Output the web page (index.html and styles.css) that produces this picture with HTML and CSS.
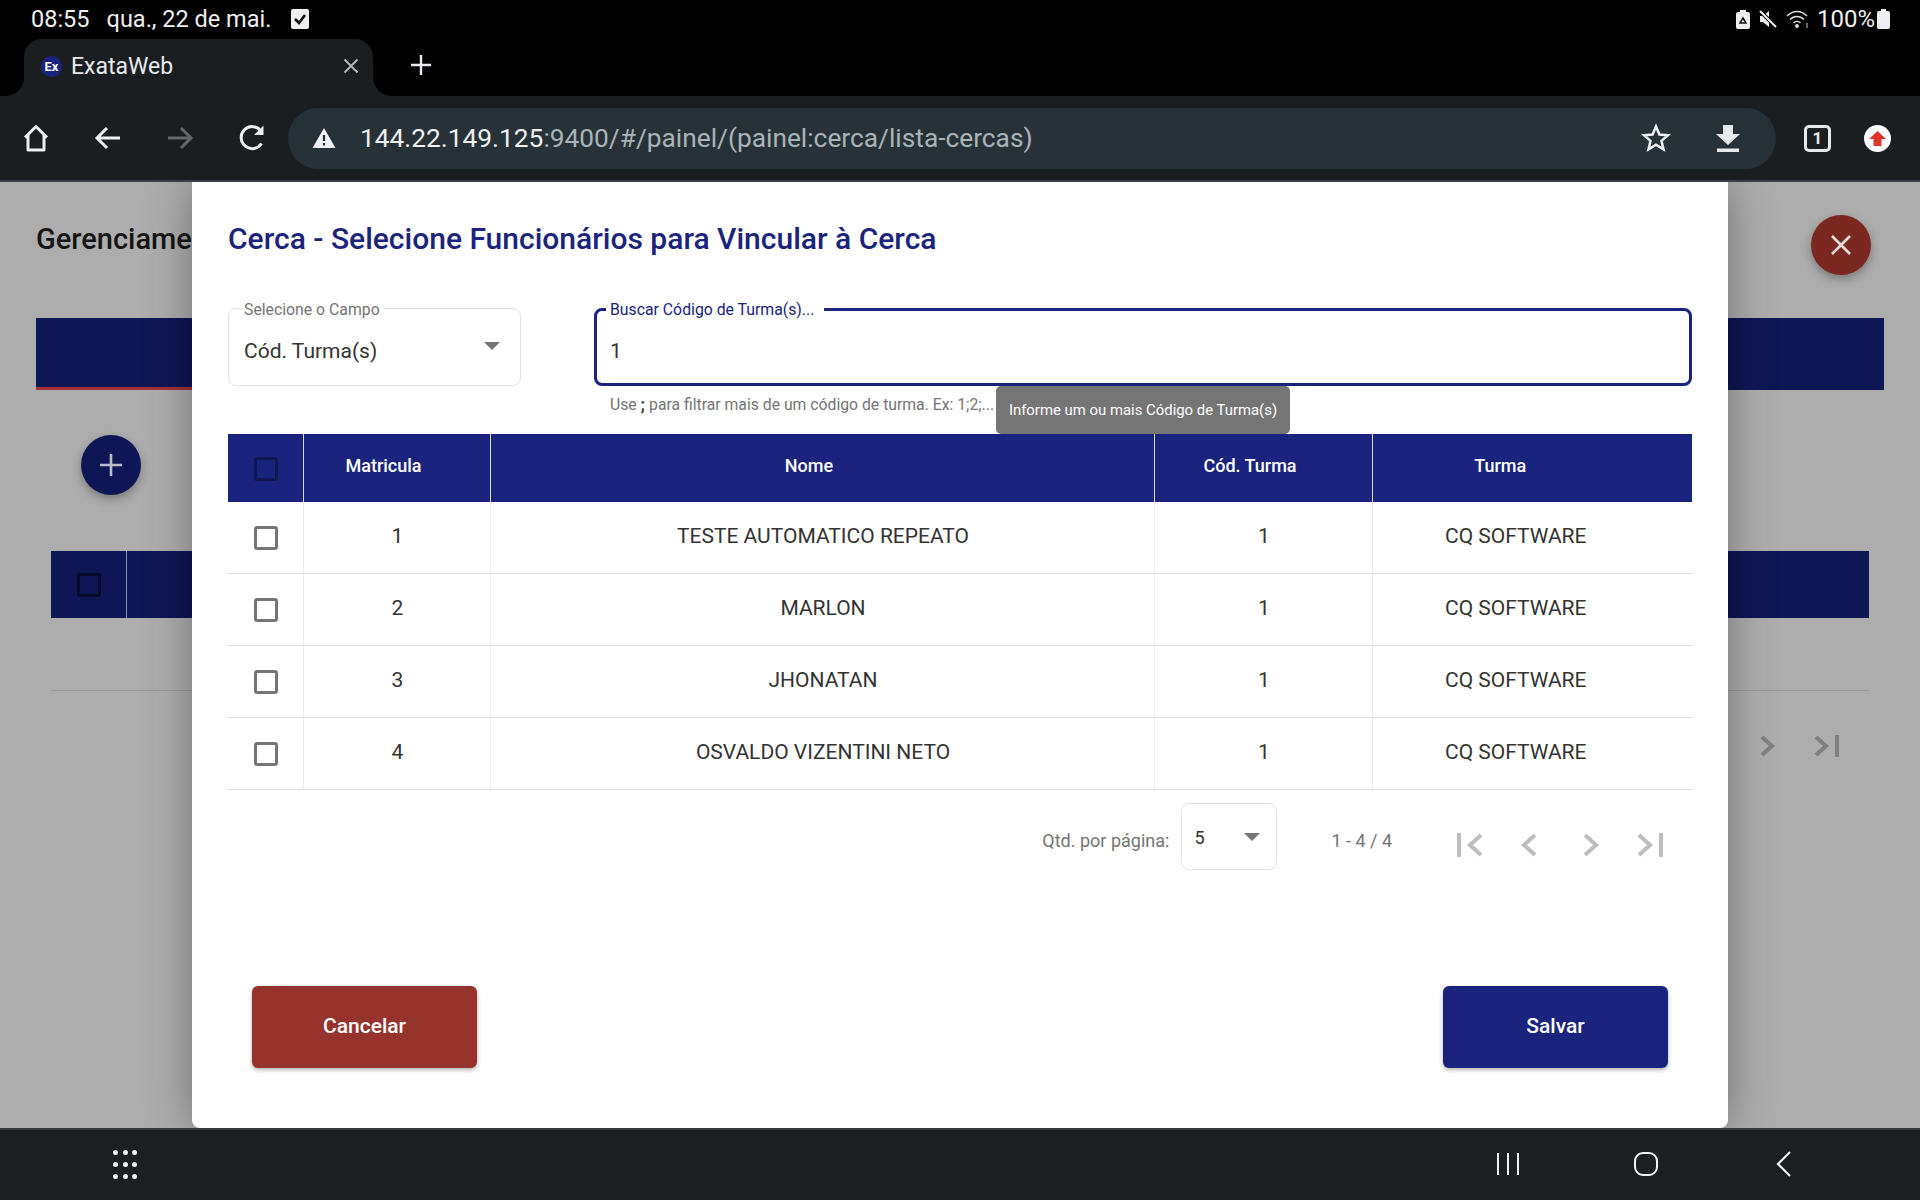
FILE: index.html
```html
<!DOCTYPE html>
<html lang="pt-BR">
  <head>
    <meta charset="UTF-8" />
    <meta name="viewport" content="width=device-width, initial-scale=1.0" />
    <title>ExataWeb</title>
    <link rel="stylesheet" href="styles.css">
  </head>
  <body>
    <div class="statusbar">
      <span class="clock">08:55</span>
      <span class="date">qua., 22 de mai.</span>
      <svg class="status-check" width="18" height="22" viewBox="0 0 18 22"><rect x="0" y="1" width="18" height="20" rx="2" fill="#eee"/><path d="M4 11l4 4 6-8" fill="none" stroke="#111" stroke-width="2.6"/></svg>
      <span class="status-right">
        <svg width="14" height="19" viewBox="0 0 14 19"><path d="M4 0h6v2h2a2 2 0 0 1 2 2v13a2 2 0 0 1-2 2H2a2 2 0 0 1-2-2V4a2 2 0 0 1 2-2h2z" fill="#eee"/><path d="M4 13l3-5 3 5z" fill="none" stroke="#111" stroke-width="1.5"/></svg>
        <svg width="18" height="18" viewBox="0 0 18 18"><path d="M1 6h3l6-5v16l-6-5H1z" fill="#eee"/><path d="M1 1l16 16" stroke="#000" stroke-width="4"/><path d="M1 1l16 16" stroke="#eee" stroke-width="2"/></svg>
        <svg width="23" height="20" viewBox="0 0 23 20" fill="none" stroke="#ddd" stroke-width="1.5"><path d="M1 7c6-6 14-6 20 0M4 10.500c4-4 10-4 14 0M7.500 14c2-2 5-2 7 0"/><circle cx="11" cy="17" r="1.200" fill="#ddd"/><path d="M21 19v-5" stroke="#888"/></svg>
        <span class="battery-text">100%</span>
        <svg width="13" height="20" viewBox="0 0 13 20"><path d="M4 0h5v2h2a2 2 0 0 1 2 2v14a2 2 0 0 1-2 2H2a2 2 0 0 1-2-2V4a2 2 0 0 1 2-2h2z" fill="#eee"/></svg>
      </span>
    </div>

    <div class="tabstrip">
      <div class="tab">
        <span class="favicon">Ex</span>
        <span class="tab-title">ExataWeb</span>
        <svg class="tab-close" width="16" height="16" viewBox="0 0 16 16"><path d="M1.500 1.500l13 13M14.500 1.500l-13 13" stroke="#b5b8ba" stroke-width="1.800"/></svg>
      </div>
      <svg class="tab-new" width="22" height="22" viewBox="0 0 22 22"><path d="M11 1v20M1 11h20" stroke="#e8eaed" stroke-width="2.400"/></svg>
    </div>

    <div class="toolbar">
      <button class="tool-btn">
        <svg width="30" height="30" viewBox="0 0 30 30" fill="none" stroke="#eef0f1" stroke-width="3" stroke-linejoin="round"><path d="M4 14.500 15 3.500l11 11M7 12v15h16V12"/></svg>
      </button>
      <button class="tool-btn">
        <svg width="28" height="28" viewBox="0 0 28 28" fill="none" stroke="#eef0f1" stroke-width="3"><path d="M26 14H4M13 4 3 14l10 10"/></svg>
      </button>
      <button class="tool-btn">
        <svg width="28" height="28" viewBox="0 0 28 28" fill="none" stroke="#62676a" stroke-width="3"><path d="M2 14h22M15 4l10 10-10 10"/></svg>
      </button>
      <button class="tool-btn">
        <svg width="28" height="28" viewBox="0 0 28 28" fill="none" stroke="#eef0f1" stroke-width="3"><path d="M23.500 19.500A11 11 0 1 1 23 7"/><path d="M25.500 1.500v9.500H16z" fill="#eef0f1" stroke="none"/></svg>
      </button>
      <div class="omnibox">
        <svg class="omni-warn" width="24" height="22" viewBox="0 0 24 22"><path d="M12 1 23.500 21H.500z" fill="#eef0f1"/><path d="M12 8v6M12 16v2.500" stroke="#263238" stroke-width="2.200"/></svg>
        <span class="url"><span class="url-host">144.22.149.125</span>:9400/#/painel/(painel:cerca/lista-cercas)</span>
        <svg class="omni-star" width="30" height="30" viewBox="0 0 30 30"><path d="M15 3.500l3.400 8 8.600.7-6.500 5.700 2 8.400L15 21.800 7.500 26.300l2-8.400L3 12.200l8.600-.7z" fill="none" stroke="#eef0f1" stroke-width="2.500" stroke-linejoin="miter"/></svg>
        <svg class="omni-download" width="24" height="28" viewBox="0 0 24 28"><path d="M7 1h10v9h7L12 21 0 10h7zM1 24.500h22V28H1z" fill="#e6e9ea"/></svg>
      </div>
      <span class="tab-count">1</span>
      <span class="update-badge">
        <svg width="17" height="15" viewBox="0 0 17 15"><path d="M8.500 0 17 8h-4.500v7h-8V8H0z" fill="#e0342b"/></svg>
      </span>
    </div>

    <main class="page">
      <div class="page-head">
        <h1 class="page-title">Gerenciame</h1>
        <span class="fab fab-close">
          <svg width="24" height="24" viewBox="0 0 24 24"><path d="M3 3l18 18M21 3 3 21" stroke="#eadcd9" stroke-width="2.600"/></svg>
        </span>
      </div>
      <div class="page-band"></div>
      <span class="fab fab-add">
        <svg width="24" height="24" viewBox="0 0 24 24"><path d="M12 1v22M1 12h22" stroke="#b9bcc9" stroke-width="2.600"/></svg>
      </span>
      <div class="page-table">
        <div class="page-table-head">
          <span class="check-cell"><span class="checkbox checkbox-head-dim"></span></span>
        </div>
      </div>
      <div class="page-pager">
        <svg width="18" height="22" viewBox="0 0 18 22" fill="none" stroke="#808080" stroke-width="4"><path d="M3 2l10 9-10 9"/></svg>
        <svg width="26" height="22" viewBox="0 0 26 22" fill="none" stroke="#808080" stroke-width="4"><path d="M2 2l10 9-10 9M23 0v22"/></svg>
      </div>

      <section class="modal">
        <h2 class="modal-title">Cerca - Selecione Funcionários para Vincular à Cerca</h2>

        <div class="filters">
          <div class="field field-select">
            <label class="field-label">Selecione o Campo</label>
            <span class="field-value">Cód. Turma(s)</span>
            <span class="select-arrow"></span>
          </div>
          <div class="field field-search">
            <label class="field-label">Buscar Código de Turma(s)...</label>
            <span class="field-value">1</span>
          </div>
        </div>

        <div class="hint-row">
          <span class="hint">Use <b>;</b> para filtrar mais de um código de turma. Ex: 1;2;...</span>
          <span class="tooltip">Informe um ou mais Código de Turma(s)</span>
        </div>

        <table class="grid">
          <colgroup>
            <col class="col-check" /><col class="col-mat" /><col class="col-name" /><col class="col-cod" /><col class="col-turma" />
          </colgroup>
          <thead>
            <tr>
              <th><span class="checkbox checkbox-head"></span></th>
              <th>Matricula</th>
              <th>Nome</th>
              <th>Cód. Turma</th>
              <th>Turma</th>
            </tr>
          </thead>
          <tbody>
            <tr>
              <td><span class="checkbox"></span></td>
              <td>1</td>
              <td>TESTE AUTOMATICO REPEATO</td>
              <td>1</td>
              <td>CQ SOFTWARE</td>
            </tr>
            <tr>
              <td><span class="checkbox"></span></td>
              <td>2</td>
              <td>MARLON</td>
              <td>1</td>
              <td>CQ SOFTWARE</td>
            </tr>
            <tr>
              <td><span class="checkbox"></span></td>
              <td>3</td>
              <td>JHONATAN</td>
              <td>1</td>
              <td>CQ SOFTWARE</td>
            </tr>
            <tr>
              <td><span class="checkbox"></span></td>
              <td>4</td>
              <td>OSVALDO VIZENTINI NETO</td>
              <td>1</td>
              <td>CQ SOFTWARE</td>
            </tr>
          </tbody>
        </table>

        <div class="pager">
          <span class="pager-label">Qtd. por página:</span>
          <div class="pager-select">
            <span>5</span>
            <span class="select-arrow"></span>
          </div>
          <span class="pager-range">1 - 4 / 4</span>
          <div class="pager-icons">
            <svg width="60" height="26" viewBox="0 0 60 26" fill="none" stroke="#bdbdbd" stroke-width="4"><path d="M19 1v24M41 3 30 13l11 10"/></svg>
            <svg width="60" height="26" viewBox="0 0 60 26" fill="none" stroke="#bdbdbd" stroke-width="4"><path d="M35 3 24 13l11 10"/></svg>
            <svg width="60" height="26" viewBox="0 0 60 26" fill="none" stroke="#bdbdbd" stroke-width="4"><path d="M25 3l11 10-11 10"/></svg>
            <svg width="60" height="26" viewBox="0 0 60 26" fill="none" stroke="#bdbdbd" stroke-width="4"><path d="M41 1v24M19 3l11 10-11 10"/></svg>
          </div>
        </div>

        <div class="actions">
          <button class="btn btn-cancel">Cancelar</button>
          <button class="btn btn-save">Salvar</button>
        </div>
      </section>
    </main>

    <div class="navbar">
      <span class="nav-dots">
        <i></i><i></i><i></i><i></i><i></i><i></i><i></i><i></i><i></i>
      </span>
      <svg class="nav-recents" width="24" height="24" viewBox="0 0 24 24"><path d="M2 1v22M12 1v22M22 1v22" stroke="#f2f2f2" stroke-width="2"/></svg>
      <svg class="nav-home" width="24" height="24" viewBox="0 0 24 24"><rect x="1" y="1" width="22" height="22" rx="8" fill="none" stroke="#f2f2f2" stroke-width="2"/></svg>
      <svg class="nav-back" width="16" height="26" viewBox="0 0 16 26"><path d="M14 1 2 13l12 12" fill="none" stroke="#f2f2f2" stroke-width="2.200"/></svg>
    </div>
  </body>
</html>
```

FILE: styles.css
```css
* {
  box-sizing: border-box;
  margin: 0;
  padding: 0;
}
html,
body {
  width: 1920px;
  height: 1200px;
  overflow: hidden;
}
body {
  display: flex;
  flex-direction: column;
  background-color: #000;
  font-family: Roboto, "Liberation Sans", sans-serif;
}

/* android status bar */
.statusbar {
  display: flex;
  align-items: center;
  height: 38px;
  padding: 0 30px 0 31px;
  color: #f0f0f0;
  font-size: 23.500px;
}
.date {
  margin-left: 17px;
}
.status-check {
  margin-left: 20px;
}
.status-right {
  display: flex;
  align-items: center;
  gap: 9px;
  margin-left: auto;
}
.battery-text {
  font-size: 24px;
  margin: 0 -7px 0 -1px;
}

/* chrome tabs */
.tabstrip {
  display: flex;
  align-items: flex-end;
  height: 58px;
  padding-left: 24px;
}
.tab {
  position: relative;
  display: flex;
  align-items: center;
  width: 349px;
  height: 57px;
  padding: 0 14px 3px 17px;
  background-color: #1b1e21;
  border-radius: 18px 18px 0 0;
}
/* flared feet of the active tab */
.tab::before,
.tab::after {
  content: "";
  position: absolute;
  bottom: 0;
  width: 18px;
  height: 18px;
}
.tab::before {
  left: -18px;
  background: radial-gradient(circle at 0 0, transparent 17.500px, #1b1e21 18px);
}
.tab::after {
  right: -18px;
  background: radial-gradient(circle at 100% 0, transparent 17.500px, #1b1e21 18px);
}
.favicon {
  display: flex;
  align-items: center;
  justify-content: center;
  width: 21px;
  height: 21px;
  border-radius: 50%;
  background-color: #1a237e;
  color: #fff;
  font-size: 13px;
  font-weight: 700;
}
.tab-title {
  margin-left: 9px;
  color: #e8eaed;
  font-size: 23px;
}
.tab-close {
  margin-left: auto;
}
.tab-new {
  margin: 0 0 20px 37px;
}

/* chrome toolbar */
.toolbar {
  display: flex;
  align-items: center;
  height: 86px;
  background-color: #1b1e21;
  border-bottom: 2px solid #3a4046;
}
.tool-btn {
  display: flex;
  align-items: center;
  justify-content: center;
  flex: none;
  width: 72px;
  height: 60px;
  background: none;
  border: none;
}
.omnibox {
  display: flex;
  align-items: center;
  width: 1488px;
  height: 61px;
  padding: 0 36px 0 24px;
  background-color: #263238;
  border-radius: 31px;
}
.url {
  margin-left: 24px;
  color: #a9b4b8;
  font-size: 26.300px;
}
.url-host {
  color: #eef0f1;
}
.omni-star {
  margin-left: auto;
}
.omni-download {
  margin-left: 45px;
}
.tab-count {
  display: flex;
  align-items: center;
  justify-content: center;
  width: 27px;
  height: 27px;
  margin-left: 28px;
  border: 3px solid #e6e9ea;
  border-radius: 5px;
  color: #e6e9ea;
  font-size: 17px;
  font-weight: 700;
}
.update-badge {
  display: flex;
  align-items: center;
  justify-content: center;
  width: 27px;
  height: 27px;
  margin-left: 33px;
  border-radius: 50%;
  background-color: #fff;
}

/* dimmed page behind the modal */
.page {
  position: relative;
  flex: 1;
  display: flex;
  flex-direction: column;
  padding: 0 36px;
  background-color: #adadad;
  overflow: hidden;
}
.page-head {
  display: flex;
  align-items: center;
  justify-content: space-between;
  height: 136px;
}
.page-title {
  height: 112px;
  white-space: nowrap;
  color: #151515;
  font-size: 29px;
  font-weight: 500;
  line-height: 114px;
  align-self: flex-start;
}
.fab {
  display: flex;
  align-items: center;
  justify-content: center;
  width: 60px;
  height: 60px;
  border-radius: 50%;
  box-shadow: 0 4px 10px rgba(0, 0, 0, 0.3);
}
.fab-close {
  margin-top: -10px;
  transform: translateX(-13px);
  background-color: #7b2820;
}
.page-band {
  height: 72px;
  background: linear-gradient(#0f1655, #0f1655) top / 100% 69px no-repeat, linear-gradient(90deg, #a23234 20%, #0f1655 20%);
}
.fab-add {
  margin: 45px 0 0 45px;
  background-color: #0f1655;
}
.page-table {
  margin: 56px 15px 0;
  height: 140px;
  border-bottom: 1px solid #999;
}
.page-table-head {
  height: 67px;
  background-color: #0f1655;
}
.check-cell {
  display: flex;
  align-items: center;
  justify-content: center;
  width: 76px;
  height: 100%;
  border-right: 1px solid #8f90a6;
}
.page-pager {
  display: flex;
  align-items: center;
  gap: 37px;
  justify-content: flex-end;
  margin: 44px 44px 0 0;
}

/* modal */
.modal {
  position: absolute;
  top: 0;
  left: 192px;
  width: 1536px;
  height: 946px;
  display: flex;
  flex-direction: column;
  padding: 36px 36px 60px;
  background-color: #fff;
  border-radius: 0 0 8px 8px;
  box-shadow: 0 0 45px rgba(0, 0, 0, 0.35);
}
.modal-title {
  height: 42px;
  color: #1a237e;
  font-size: 30px;
  font-weight: 500;
  line-height: 42px;
}
.filters {
  display: flex;
  gap: 73px;
  margin-top: 48px;
}
.field {
  position: relative;
  display: flex;
  align-items: center;
  height: 78px;
  padding: 7px 15px 0;
  border: 1px solid #e2e2e2;
  border-radius: 8px;
}
.field-select {
  width: 293px;
}
.field-search {
  flex: 1;
  padding-left: 13px;
  border: 3px solid #1a237e;
}
.field-label {
  position: absolute;
  top: -8px;
  left: 11px;
  padding: 0 4px;
  background-color: #fff;
  color: #757575;
  font-size: 15.800px;
  line-height: 18px;
}
.field-search .field-label {
  top: -10px;
  left: 9px;
  padding-right: 10px;
  color: #1a237e;
}
.field-value {
  color: #333;
  font-size: 21px;
}
.select-arrow {
  width: 0;
  height: 0;
  border-left: 8px solid transparent;
  border-right: 8px solid transparent;
  border-top: 8px solid #757575;
}
.field-select .select-arrow {
  margin: -9px 5px 0 auto;
}

.hint-row {
  position: relative;
  height: 48px;
  padding: 9px 0 0 382px;
}
.hint {
  color: #757575;
  font-size: 15.750px;
}
.hint b {
  color: #444;
  font-weight: 900;
}
.tooltip {
  position: absolute;
  top: 0;
  left: 768px;
  width: 294px;
  height: 48px;
  background-color: #757575;
  border-radius: 5px;
  color: #fff;
  font-size: 14.900px;
  line-height: 48px;
  text-align: center;
}

/* table */
.grid {
  width: 1464px;
  border-collapse: collapse;
  table-layout: fixed;
}
.col-check {
  width: 75px;
}
.col-mat {
  width: 187px;
}
.col-name {
  width: 664px;
}
.col-cod {
  width: 218px;
}
.grid th {
  height: 68px;
  padding: 0 26px 5px 0;
  background-color: #1a237e;
  border-left: 1px solid #d6d8e8;
  color: #fff;
  font-size: 18px;
  font-weight: 500;
}
.grid th:first-child {
  padding: 2px 0 0 1px;
  border-left: none;
}
.grid th:last-child {
  padding-right: 64px;
}
.grid td {
  height: 72px;
  padding: 0 0 2px 2px;
  border-left: 1px solid #ececec;
  border-bottom: 1px solid #e0e0e0;
  color: #333;
  font-size: 21px;
  text-align: center;
}
.grid tbody tr:first-child td {
  height: 71px;
}
.grid td:first-child {
  padding: 0 0 0 1px;
  border-left: none;
}
.grid td:last-child {
  padding-right: 35px;
}
.checkbox {
  display: inline-block;
  width: 24px;
  height: 24px;
  vertical-align: middle;
  border: 3px solid #757575;
  border-radius: 3px;
}
.checkbox-head {
  border-color: #11174f;
}
.checkbox-head-dim {
  border-color: #070a2b;
}

/* pagination */
.pager {
  display: flex;
  align-items: center;
  height: 93px;
  padding: 13px 12px 10px 0;
  justify-content: flex-end;
  color: #757575;
  font-size: 18px;
}
.pager-label {
  margin-top: 6px;
}
.pager-select {
  display: flex;
  width: 96px;
  height: 67px;
  margin: -2px 0 0 12px;
  padding: 23px 16px 0 12px;
  border: 1px solid #e2e2e2;
  border-radius: 8px;
  color: #333;
}
.pager-select .select-arrow {
  margin: 6px 0 0 auto;
}
.pager-range {
  margin: 6px 0 0 54px;
}
.pager-icons {
  display: flex;
  margin: 14px 0 0 48px;
}

.actions {
  display: flex;
  justify-content: space-between;
  margin-top: auto;
  padding: 0 24px;
}
.btn {
  width: 225px;
  height: 82px;
  padding-bottom: 2px;
  border: none;
  border-radius: 6px;
  color: #fff;
  font-family: inherit;
  font-size: 21px;
  font-weight: 500;
  box-shadow: 0 2px 4px rgba(0, 0, 0, 0.3);
}
.btn-cancel {
  background-color: #96332c;
}
.btn-save {
  background-color: #1a237e;
}

/* android nav bar */
.navbar {
  display: flex;
  align-items: center;
  height: 72px;
  padding-bottom: 2px;
  background-color: #1b1f22;
  border-top: 2px solid #33383d;
}
.nav-dots {
  display: grid;
  grid-template-columns: repeat(3, 5px);
  gap: 7px 4.500px;
  margin-left: 113px;
}
.nav-dots i {
  width: 5px;
  height: 5px;
  border-radius: 50%;
  background-color: #f2f2f2;
}
.nav-recents {
  margin-left: 1359px;
}
.nav-home {
  margin-left: 114px;
}
.nav-back {
  margin-left: 118px;
}
```
